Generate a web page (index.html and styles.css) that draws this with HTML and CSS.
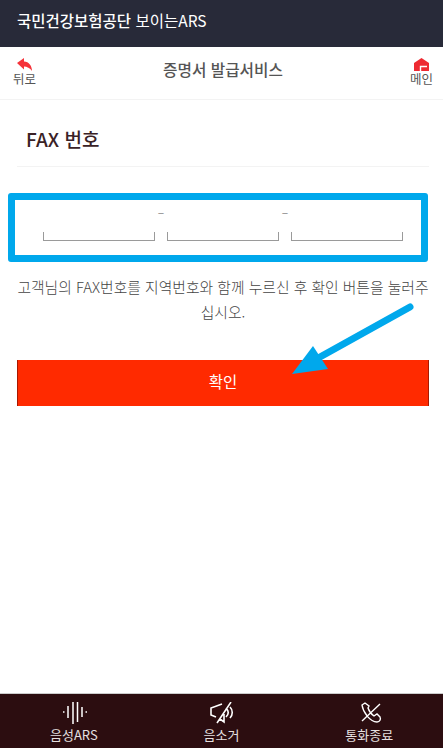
FILE: index.html
```html
<!DOCTYPE html>
<html lang="ko">
  <head>
    <meta charset="utf-8">
    <title>보이는ARS</title>
    <link rel="stylesheet" href="styles.css">
  </head>
<body>

<div class="page">
  <div class="topbar"><b>국민건강보험공단</b> 보이는ARS</div>

  <div class="header">
    <a class="head-btn">
      <svg width="15" height="13" viewBox="0 0 15 13"><path d="M0 5 L7 0 V3.500 C12 3.500 15 8 15 13 C13 10 10 8.500 7 8.500 V11.500 Z" fill="#f5333a"/></svg>
      <span>뒤로</span>
    </a>
    <div class="head-title">증명서 발급서비스</div>
    <a class="head-btn">
      <svg width="15" height="13" viewBox="0 0 15 13">
        <path d="M0 5 L7.500 0 L15 5 V13 H0 Z" fill="#ee2a32"/>
        <path d="M6.500 13 V8.500 H13" stroke="#fff" stroke-width="1.400" fill="none"/>
      </svg>
      <span>메인</span>
    </a>
  </div>

  <div class="content">
    <h2 class="section-title">FAX 번호</h2>

    <div class="fax-box">
      <div class="fax-field"><span class="line"></span></div>
      <span class="dash">–</span>
      <div class="fax-field"><span class="line"></span></div>
      <span class="dash">–</span>
      <div class="fax-field"><span class="line"></span></div>
    </div>

    <p class="guide">고객님의 FAX번호를 지역번호와 함께 누르신 후 확인 버튼을 눌러주십시오.</p>

    <button class="confirm">확인</button>
  </div>

  <svg class="arrow" width="130" height="80" viewBox="0 0 130 80">
    <path d="M121 4 L31 54" stroke="#00a8ec" stroke-width="7" stroke-linecap="round" fill="none"/>
    <path d="M3 71 L24 43 L39 66 Z" fill="#00a8ec"/>
  </svg>

  <div class="footer">
    <a class="foot-btn">
      <svg width="26" height="22" viewBox="0 0 26 22" fill="none" stroke="#fff" stroke-width="1.500">
        <path d="M2 10 H3.500 M7 4 V16 M12 0 V22 M16.500 0 V20 M21 5 V15 M24.500 10 H26"/>
      </svg>
      <span>음성ARS</span>
    </a>
    <a class="foot-btn">
      <svg width="26" height="22" viewBox="0 0 26 22" fill="none" stroke="#fff" stroke-width="1.600">
        <path d="M13 2 L2 6 V13 L7 15 M11 17 L15 20 V12 M22 0 L8 21 M17 6 C20 9 20 12 17 15 M21 5 C24 8 24 13 21 16"/>
      </svg>
      <span>음소거</span>
    </a>
    <a class="foot-btn">
      <svg width="26" height="22" viewBox="0 0 26 22" fill="none" stroke="#fff" stroke-width="1.400">
        <path d="M24 2 L6 19 M9 1 L6 3 C7 10 14 20 21 20 C24 20 25 17 24 15 L21 12 L18 14 C15 12 13 9 12 6 L13 4 Z"/>
      </svg>
      <span>통화종료</span>
    </a>
  </div>
</div>

</body></html>
```

FILE: styles.css
```css
html, body {
  margin: 0;
  padding: 0;
}

body {
  font-family: "Noto Sans CJK KR", "Noto Sans", sans-serif;
  background: #fff;
}

.page {
  position: relative;
  width: 443px;
  height: 748px;
  display: flex;
  flex-direction: column;
  overflow: hidden;
}

.topbar {
  height: 47px;
  box-sizing: border-box;
  padding-left: 17px;
  line-height: 40px;
  background: #282a39;
  color: #fff;
  font-size: 15.500px;
  font-weight: 400;
}

.topbar b {
  font-weight: 500;
}

.header {
  height: 53px;
  box-sizing: border-box;
  padding: 11px 10px 0 13px;
  border-bottom: 1px solid #f3f3f3;
  display: flex;
  justify-content: space-between;
  align-items: flex-start;
}

.head-btn {
  display: flex;
  flex-direction: column;
  align-items: center;
  font-size: 12.500px;
  line-height: 16px;
  color: #555;
}

.head-btn svg {
  display: block;
}

.head-title {
  font-size: 15.700px;
  font-weight: 500;
  line-height: 20px;
  color: #555;
  padding-top: 2px;
}

.content {
  flex: 1;
  padding: 0 14px 0 17px;
}

.section-title {
  margin: 0;
  height: 67px;
  box-sizing: border-box;
  padding-left: 9px;
  line-height: 77px;
  font-size: 19px;
  font-weight: 500;
  color: #3a2226;
  border-bottom: 1px solid #f3f3f3;
}

.fax-box {
  margin: 26px 0 0 -9px;
  width: 420px;
  height: 69px;
  box-sizing: border-box;
  border: 7px solid #00a8ec;
  border-radius: 3px;
  padding: 0 18px 14px 28px;
  display: flex;
  align-items: flex-end;
}

.fax-field {
  flex: 1;
}

.line {
  display: block;
  height: 8px;
  border: 1px solid #9a9a9a;
  border-top: none;
}

.dash {
  width: 12px;
  align-self: flex-start;
  margin-top: 5px;
  text-align: center;
  font-size: 12px;
  line-height: 14px;
  color: #888;
}

.guide {
  margin: 12px 0 0;
  font-size: 14.800px;
  font-weight: 300;
  line-height: 25px;
  text-align: center;
  color: #444;
}

.confirm {
  display: block;
  width: 412px;
  height: 46px;
  margin-top: 36px;
  padding: 0 0 5px;
  border: none;
  border-left: 1px solid #a81800;
  border-right: 1px solid #a81800;
  background: #ff2a00;
  color: #fff;
  font-family: inherit;
  font-size: 15.500px;
  font-weight: 400;
}

.arrow {
  position: absolute;
  left: 289px;
  top: 303px;
}

.footer {
  height: 55px;
  box-sizing: border-box;
  padding-top: 8px;
  background: #2c0d10;
  border-top: 1px solid #ccc;
  display: flex;
}

.foot-btn {
  flex: 1;
  display: flex;
  flex-direction: column;
  align-items: center;
  color: #e6e0e0;
  font-size: 13px;
  line-height: 20px;
}

.foot-btn svg {
  display: block;
}

.foot-btn span {
  margin-top: 1px;
}
```
